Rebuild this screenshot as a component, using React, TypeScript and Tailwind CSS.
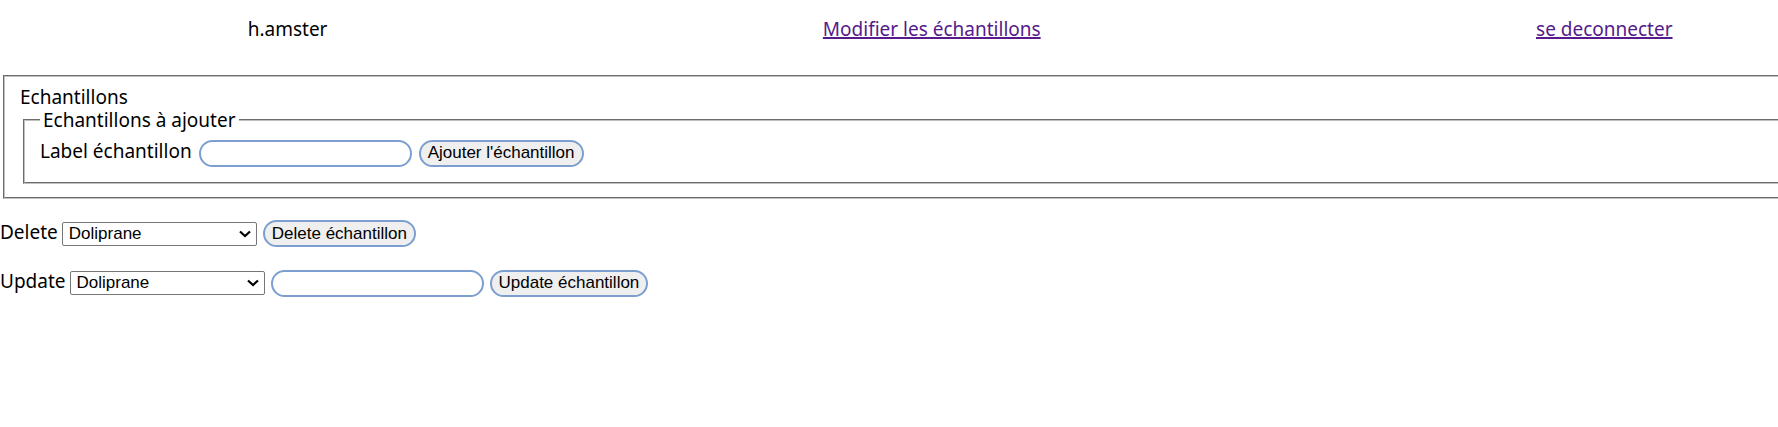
import { useState } from "react";

const samples = ["Doliprane"];

const field =
  "h-[27px] w-[213px] rounded-full border-2 border-[#7c9fd0] bg-white px-2 font-['Liberation_Sans',sans-serif] text-[17px] leading-5 outline-none";
const action =
  "h-[27px] rounded-full border-2 border-[#7c9fd0] bg-[#efefef] px-[7px] font-['Liberation_Sans',sans-serif] text-[17px] leading-5 whitespace-nowrap text-black";
const frame = "min-w-0 border-2 border-[#c0c0c0] [border-style:groove]";
const link = "text-[#551a8b] underline decoration-2";

function SampleSelect({ id }: { id: string }) {
  return (
    <span className="grid items-center">
      <select
        id={id}
        className="col-start-1 row-start-1 h-6 w-[195px] appearance-none rounded-xs border border-[#767676] bg-white pr-6 pl-1.5 font-['Liberation_Sans',sans-serif] text-[17px] leading-5 text-black"
      >
        {samples.map((s) => (
          <option key={s}>{s}</option>
        ))}
      </select>
      <svg
        viewBox="0 0 12 8"
        className="pointer-events-none col-start-1 row-start-1 mr-1.5 h-2 w-3 justify-self-end"
        fill="none"
        stroke="#000"
        strokeWidth="2.2"
        aria-hidden="true"
      >
        <path d="M1 1.5 6 6 11 1.5" />
      </svg>
    </span>
  );
}

export default function App() {
  const [label, setLabel] = useState("");
  const [name, setName] = useState("");

  return (
    <div className="overflow-x-hidden bg-white font-['Noto_Sans',sans-serif] text-[19px] leading-6 text-black">
      <div className="w-[108%]">
        <nav className="flex justify-around pt-[17px] pb-[34px]">
          <span>h.amster</span>
          <a href="#echantillons" className={link}>
            Modifier les échantillons
          </a>
          <a href="#deconnexion" className={link}>
            se deconnecter
          </a>
        </nav>

        <form id="echantillons" onSubmit={(e) => e.preventDefault()}>
          <fieldset className={`${frame} mx-[3px] px-[15px] pt-2 pb-[13px]`}>
            <p>Echantillons</p>
            <fieldset className={`${frame} mx-[3px] px-[15px] pb-[15px]`}>
              <legend className="px-[3px] leading-[22px]">Echantillons à ajouter</legend>
              <div className="flex items-baseline gap-[7px] pt-2">
                <label htmlFor="label">Label échantillon</label>
                <input
                  id="label"
                  type="text"
                  value={label}
                  onChange={(e) => setLabel(e.target.value)}
                  className={field}
                />
                <button type="submit" className={action}>
                  Ajouter l'échantillon
                </button>
              </div>
            </fieldset>
          </fieldset>
        </form>

        <form className="mt-[21px] flex items-baseline gap-1.5" onSubmit={(e) => e.preventDefault()}>
          <span className="flex items-baseline gap-1">
            <label htmlFor="delete">Delete</label>
            <SampleSelect id="delete" />
          </span>
          <button type="submit" className={action}>
            Delete échantillon
          </button>
        </form>

        <form className="mt-[22px] flex items-baseline gap-1.5" onSubmit={(e) => e.preventDefault()}>
          <span className="flex items-baseline gap-1">
            <label htmlFor="update">Update</label>
            <SampleSelect id="update" />
          </span>
          <input
            type="text"
            aria-label="Update"
            value={name}
            onChange={(e) => setName(e.target.value)}
            className={field}
          />
          <button type="submit" className={action}>
            Update échantillon
          </button>
        </form>
      </div>
    </div>
  );
}
